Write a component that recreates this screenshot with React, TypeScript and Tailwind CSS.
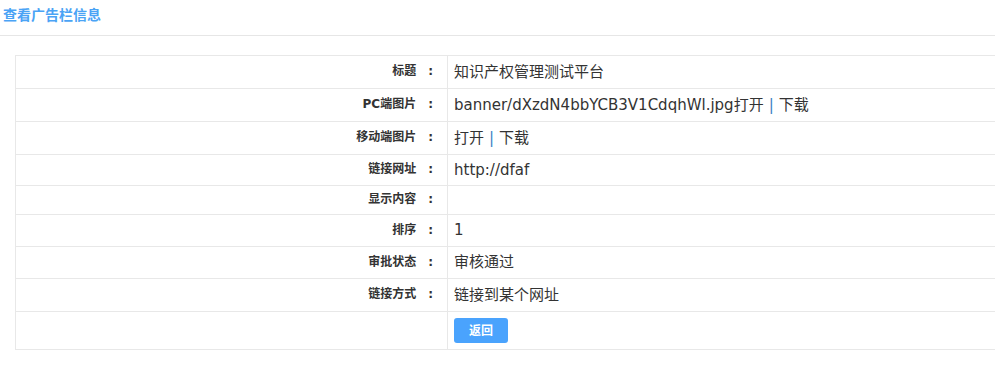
import React from "react";

const font = { fontFamily: '"DejaVu Sans", "Noto Sans CJK SC", sans-serif' };

type Row = { label: string; h: string; value: React.ReactNode };

const Sep = () => <span className="text-[#3b7fc4] mx-[5px]">|</span>;

const rows: Row[] = [
  { label: "标题", h: "h-[33px]", value: "知识产权管理测试平台" },
  {
    label: "PC端图片",
    h: "h-[33px]",
    value: (
      <>
        banner/dXzdN4bbYCB3V1CdqhWl.jpg<span>打开</span>
        <Sep />
        <span>下载</span>
      </>
    ),
  },
  {
    label: "移动端图片",
    h: "h-[33px]",
    value: (
      <>
        <span>打开</span>
        <Sep />
        <span>下载</span>
      </>
    ),
  },
  { label: "链接网址", h: "h-[31px]", value: "http://dfaf" },
  { label: "显示内容", h: "h-[29px]", value: "" },
  { label: "排序", h: "h-[32px]", value: "1" },
  { label: "审批状态", h: "h-[32px]", value: "审核通过" },
  { label: "链接方式", h: "h-[33px]", value: "链接到某个网址" },
];

export default function App() {
  return (
    <div className="w-full h-[371px] bg-white overflow-hidden" style={font}>
      <div className="h-[36px] border-b border-[#e6e6e6] pl-[3px] pt-[3px]">
        <span className="text-[14px] leading-[18px] font-bold text-[#4aa3f5]">查看广告栏信息</span>
      </div>
      <div className="mt-[19px] ml-[15px] border-l border-t border-[#e8e8e8]">
        {rows.map((r) => (
          <div key={r.label} className={`flex border-b border-[#e8e8e8] ${r.h}`}>
            <div className="w-[432px] shrink-0 border-r border-[#e8e8e8] flex items-center justify-end pr-[14px] pb-[2px] text-[12px] font-bold text-[#333]">
              <span>{r.label}</span>
              <span className="ml-[12px]">:</span>
            </div>
            <div className="flex-1 flex items-center pl-[6px] text-[15px] text-[#333] whitespace-nowrap">
              {r.value}
            </div>
          </div>
        ))}
        <div className="flex border-b border-[#e8e8e8] h-[38px]">
          <div className="w-[432px] shrink-0 border-r border-[#e8e8e8]" />
          <div className="flex-1 flex items-start pl-[6px] pt-[6px]">
            <button className="w-[54px] h-[25px] rounded-[3px] bg-[#4aa3fd] text-white text-[12px] font-bold">
              返回
            </button>
          </div>
        </div>
      </div>
    </div>
  );
}
